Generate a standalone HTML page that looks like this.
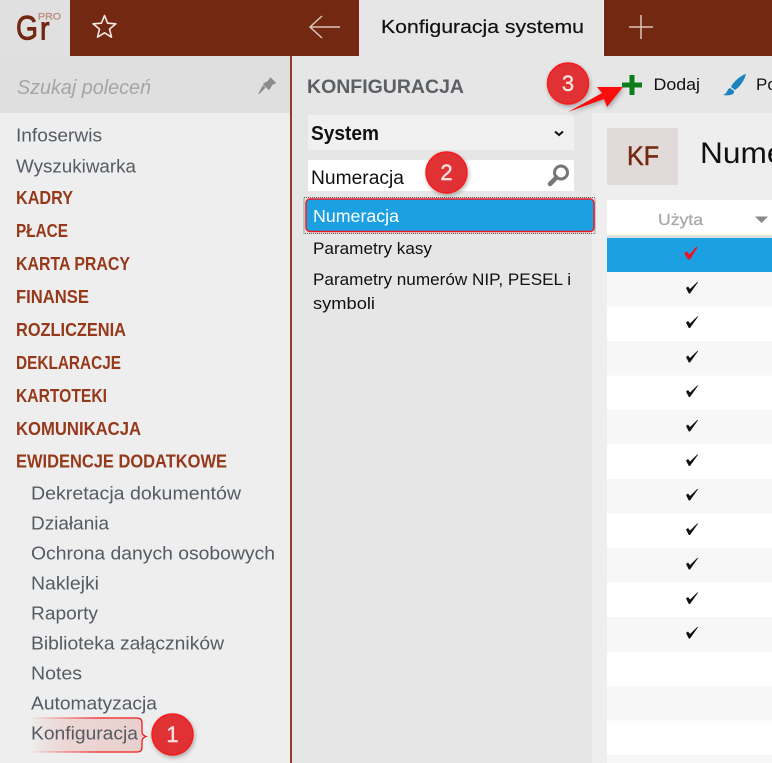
<!DOCTYPE html>
<html lang="pl"><head><meta charset="utf-8"><title>Konfiguracja systemu</title>
<style>
html,body{margin:0;padding:0;width:772px;height:763px;overflow:hidden;background:#eee}
svg{display:block}
text{font-family:"Liberation Sans",sans-serif}
.m{font-size:18px;fill:#555b63}
.h{font-size:18px;font-weight:bold;fill:#96391a}
.k{font-size:17px;fill:#111}
.n{font-size:22px;fill:#fbe3e3;stroke:#fbe3e3;stroke-width:.4px;text-anchor:middle}
</style></head><body>
<svg width="772" height="763" viewBox="0 0 772 763" xmlns="http://www.w3.org/2000/svg">
<defs>
<linearGradient id="fade" x1="0" x2="1" y1="0" y2="0"><stop offset="0" stop-color="#e6c9c6" stop-opacity="0"/><stop offset=".35" stop-color="#ecd6d4"/><stop offset="1" stop-color="#e8cfcd"/></linearGradient>
<linearGradient id="edge" x1="0" x2="1" y1="0" y2="0"><stop offset="0" stop-color="#f01c1c" stop-opacity="0"/><stop offset=".6" stop-color="#f01c1c"/></linearGradient>
<filter id="sh" x="-30%" y="-30%" width="160%" height="160%"><feDropShadow dx="1" dy="2" stdDeviation="2" flood-color="#000" flood-opacity=".3"/></filter>
</defs>
<!-- backgrounds -->
<rect width="772" height="763" fill="#eeeeee"/>
<rect width="772" height="56" fill="#722811"/>
<rect width="70" height="56" fill="#e0e0e0"/>
<rect x="359" width="245" height="56" fill="#e6e6e6"/>
<rect x="603" width="1" height="56" fill="#f4f4f4"/>
<rect y="56" width="290" height="57" fill="#dfdfdf"/>
<rect x="292" y="56" width="480" height="57" fill="#e6e6e6"/>
<rect x="292" y="113" width="300" height="650" fill="#e6e6e6"/>
<rect x="592" y="113" width="180" height="650" fill="#eeeeee"/>
<rect x="290" y="56" width="2" height="707" fill="#8e3e25"/>
<!-- logo -->
<text x="16" y="39.500" font-size="34" fill="#722811" stroke="#722811" stroke-width=".9" textLength="22" lengthAdjust="spacingAndGlyphs">G</text>
<text x="40" y="39.500" font-size="32" fill="#722811" stroke="#722811" stroke-width=".9" textLength="9.500" lengthAdjust="spacingAndGlyphs">r</text>
<text x="38" y="19.500" font-size="9" fill="#b98c7d" stroke="#b98c7d" stroke-width=".3" textLength="23" lengthAdjust="spacingAndGlyphs">PRO</text>
<!-- star -->
<path d="M104.500 15.500L107.600 23.200L115.900 23.800L109.500 29.100L111.500 37.200L104.500 32.800L97.500 37.200L99.500 29.100L93.100 23.800L101.400 23.200Z" fill="none" stroke="#f4e9e5" stroke-width="1.600" stroke-linejoin="round"/>
<!-- back arrow -->
<path d="M340 27H310M322 16L310 27L322 38" fill="none" stroke="#dcc5bc" stroke-width="1.500"/>
<text x="381" y="33" font-size="18.500" fill="#111" stroke="#111" stroke-width=".2" textLength="203" lengthAdjust="spacingAndGlyphs">Konfiguracja systemu</text>
<!-- plus -->
<path d="M641 15V39M629 27H653" fill="none" stroke="#dcc5bc" stroke-width="1.500"/>
<!-- sidebar search -->
<text x="17" y="94" font-size="20" font-style="italic" fill="#a5a5a5" textLength="134" lengthAdjust="spacingAndGlyphs">Szukaj poleceń</text>
<path d="M270.500 78L275.500 83L272 84.500L269 89.500L263.500 84L268.500 81ZM265 87.500L259 93.500L263 86Z" fill="#8c8c8c" stroke="#8c8c8c" stroke-width="1" stroke-linejoin="round"/>
<!-- menu -->
<text class="m" x="16" y="141.500" textLength="86" lengthAdjust="spacingAndGlyphs">Infoserwis</text>
<text class="m" x="16" y="172.500" textLength="120" lengthAdjust="spacingAndGlyphs">Wyszukiwarka</text>
<text class="h" x="16" y="204" textLength="57" lengthAdjust="spacingAndGlyphs">KADRY</text>
<text class="h" x="16" y="237" textLength="52" lengthAdjust="spacingAndGlyphs">PŁACE</text>
<text class="h" x="16" y="270" textLength="114" lengthAdjust="spacingAndGlyphs">KARTA PRACY</text>
<text class="h" x="16" y="303" textLength="73" lengthAdjust="spacingAndGlyphs">FINANSE</text>
<text class="h" x="16" y="336" textLength="110" lengthAdjust="spacingAndGlyphs">ROZLICZENIA</text>
<text class="h" x="16" y="369" textLength="105" lengthAdjust="spacingAndGlyphs">DEKLARACJE</text>
<text class="h" x="16" y="402" textLength="91" lengthAdjust="spacingAndGlyphs">KARTOTEKI</text>
<text class="h" x="16" y="435" textLength="125" lengthAdjust="spacingAndGlyphs">KOMUNIKACJA</text>
<text class="h" x="16" y="467.500" textLength="211" lengthAdjust="spacingAndGlyphs">EWIDENCJE DODATKOWE</text>
<text class="m" x="31" y="499.500" textLength="210" lengthAdjust="spacingAndGlyphs">Dekretacja dokumentów</text>
<text class="m" x="31" y="529.500" textLength="78" lengthAdjust="spacingAndGlyphs">Działania</text>
<text class="m" x="31" y="559.500" textLength="244" lengthAdjust="spacingAndGlyphs">Ochrona danych osobowych</text>
<text class="m" x="31" y="589.500" textLength="68" lengthAdjust="spacingAndGlyphs">Naklejki</text>
<text class="m" x="31" y="619.500" textLength="67" lengthAdjust="spacingAndGlyphs">Raporty</text>
<text class="m" x="31" y="649.500" textLength="193" lengthAdjust="spacingAndGlyphs">Biblioteka załączników</text>
<text class="m" x="31" y="679.500" textLength="51" lengthAdjust="spacingAndGlyphs">Notes</text>
<text class="m" x="31" y="709.500" textLength="126" lengthAdjust="spacingAndGlyphs">Automatyzacja</text>
<!-- highlight 1 -->
<path d="M30 718H137Q142 718 142 723V732Q142 735 146 736.500Q142 738 142 741V747Q142 752 137 752H30Z" fill="url(#fade)"/>
<path d="M30 718H137Q142 718 142 723V732Q142 735 146 736.500Q142 738 142 741V747Q142 752 137 752H30" fill="none" stroke="url(#edge)" stroke-width="1.300"/>
<text class="m" x="31" y="739.500" textLength="107" lengthAdjust="spacingAndGlyphs">Konfiguracja</text>
<!-- mid -->
<text x="307" y="93" font-size="19" font-weight="bold" fill="#5c5f63" textLength="157" lengthAdjust="spacingAndGlyphs">KONFIGURACJA</text>
<rect x="308" y="115" width="266" height="35" fill="#f0f0f0"/>
<text x="311" y="140" font-size="20" font-weight="bold" fill="#111" textLength="68" lengthAdjust="spacingAndGlyphs">System</text>
<path d="M555 131.500L559 135L563 131.500" fill="none" stroke="#111" stroke-width="2"/>
<rect x="308" y="160" width="266" height="31" fill="#fff"/>
<text x="311" y="184" font-size="19" fill="#111" textLength="93" lengthAdjust="spacingAndGlyphs">Numeracja</text>
<circle cx="561" cy="172.500" r="6.500" fill="none" stroke="#777" stroke-width="3"/>
<path d="M556.500 177.500L550 184" stroke="#777" stroke-width="4.500" stroke-linecap="round"/>
<rect x="304" y="197.500" width="291" height="36" fill="none" stroke="#555" stroke-width="1" stroke-dasharray="1 1"/>
<rect x="306" y="199" width="288" height="32.500" rx="4" fill="#1ba1e2" stroke="#ee1c25" stroke-width="1.500"/>
<text x="313" y="222" font-size="17.500" fill="#fff" textLength="86" lengthAdjust="spacingAndGlyphs">Numeracja</text>
<text class="k" x="313" y="254" textLength="119" lengthAdjust="spacingAndGlyphs">Parametry kasy</text>
<text class="k" x="313" y="285" textLength="258" lengthAdjust="spacingAndGlyphs">Parametry numerów NIP, PESEL i</text>
<text class="k" x="313" y="309" textLength="62" lengthAdjust="spacingAndGlyphs">symboli</text>
<!-- toolbar -->
<path d="M632 75V95M622 85H642" stroke="#0d7d1c" stroke-width="5"/>
<text x="653.500" y="90" font-size="17" fill="#111" textLength="46.500" lengthAdjust="spacingAndGlyphs">Dodaj</text>
<path d="M746 74C741 75 733 82 731 87L735 90C740 87 745 79 746 74Z" fill="#1b83bd"/>
<path d="M730 88C727 89 728 93 723 95C728 96 735 95 734 91Z" fill="#1b83bd"/>
<text x="756" y="90" font-size="17" fill="#111">Po</text>
<!-- right header -->
<rect x="607" y="128" width="71" height="57" fill="#e2dad8"/>
<text x="627" y="165" font-size="27" fill="#722811" stroke="#722811" stroke-width=".5" textLength="32" lengthAdjust="spacingAndGlyphs">KF</text>
<text x="700" y="163" font-size="30" fill="#111" textLength="95" lengthAdjust="spacingAndGlyphs">Numer</text>
<!-- table -->
<rect x="607" y="200" width="165" height="563" fill="#fff"/>
<text x="658" y="225" font-size="16" fill="#a8a8a8" stroke="#a8a8a8" stroke-width=".25" textLength="45" lengthAdjust="spacingAndGlyphs">Użyta</text>
<path d="M755 216.500H768L761.500 223Z" fill="#8a8a8a"/>
<rect x="607" y="235" width="165" height="3" fill="#e0e0e0"/>
<rect x="607" y="272" width="165" height="34.500" fill="#f7f7f7"/>
<rect x="607" y="341" width="165" height="34.500" fill="#f7f7f7"/>
<rect x="607" y="410" width="165" height="34.500" fill="#f7f7f7"/>
<rect x="607" y="479" width="165" height="34.500" fill="#f7f7f7"/>
<rect x="607" y="548" width="165" height="34.500" fill="#f7f7f7"/>
<rect x="607" y="617" width="165" height="34.500" fill="#f7f7f7"/>
<rect x="607" y="686" width="165" height="34.500" fill="#f7f7f7"/>
<rect x="607" y="755" width="165" height="8" fill="#f7f7f7"/>
<rect x="607" y="238" width="165" height="34" fill="#1ba1e2"/>
<!-- checks -->
<path d="M684 253L687 251.500L689.500 254.500L696.500 246.500L697.500 247.500L690 259.500H688Z" fill="#f0102c"/>
<g fill="#111">
<path d="M686 288L688 286.500L690 289L697.500 281.800L698 282.300L690 293.500H688.800Z"/>
<path d="M686 322.500L688 321L690 323.500L697.500 316.300L698 316.800L690 328H688.800Z"/>
<path d="M686 357L688 355.500L690 358L697.500 350.800L698 351.300L690 362.500H688.800Z"/>
<path d="M686 391.500L688 390L690 392.500L697.500 385.300L698 385.800L690 397H688.800Z"/>
<path d="M686 426L688 424.500L690 427L697.500 419.800L698 420.300L690 431.500H688.800Z"/>
<path d="M686 460.500L688 459L690 461.500L697.500 454.300L698 454.800L690 466H688.800Z"/>
<path d="M686 495L688 493.500L690 496L697.500 488.800L698 489.300L690 500.500H688.800Z"/>
<path d="M686 529.500L688 528L690 530.500L697.500 523.300L698 523.800L690 535H688.800Z"/>
<path d="M686 564L688 562.500L690 565L697.500 557.800L698 558.300L690 569.500H688.800Z"/>
<path d="M686 598.500L688 597L690 599.500L697.500 592.300L698 592.800L690 604H688.800Z"/>
<path d="M686 633L688 631.500L690 634L697.500 626.800L698 627.300L690 638.500H688.800Z"/>
</g>
<!-- annotations -->
<g filter="url(#sh)">
<path d="M568 112L602 93L597 87L623 87L607 107L604 99Z" fill="#f90f0f"/>
<circle cx="568" cy="83.500" r="20.500" fill="#e03034" stroke="#f61b1e" stroke-width="1.500"/>
<circle cx="446.500" cy="172.500" r="20.500" fill="#e03034" stroke="#f61b1e" stroke-width="1.500"/>
<circle cx="172.500" cy="734.500" r="20.500" fill="#e03034" stroke="#f61b1e" stroke-width="1.500"/>
</g>
<text class="n" x="568" y="91">3</text>
<text class="n" x="446.500" y="180">2</text>
<text class="n" x="172.500" y="742">1</text>
</svg>
</body></html>
